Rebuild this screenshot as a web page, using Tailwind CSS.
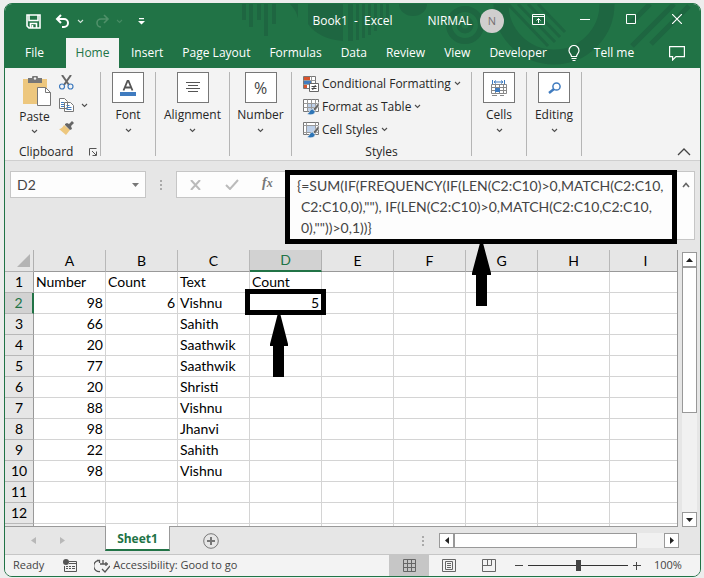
<!DOCTYPE html>
<html lang="en">
<head>
  <meta charset="UTF-8">
  <meta name="viewport" content="width=device-width, initial-scale=1">
  <title>Book1 - Excel</title>
  <script src="https://cdn.jsdelivr.net/npm/@tailwindcss/browser@4"></script>
</head>
<body class="bg-[#ededed] pt-[3px] pl-1 pr-[3px] font-['Open_Sans','Noto_Sans',sans-serif] text-xs text-[#262626]">

  <!-- Shared icons -->
  <svg class="hidden">
    <symbol id="chevron" viewBox="0 0 7 5"><path d="M1 1l2.500 2.500L6 1" fill="none" stroke="currentColor" stroke-width="1.100" opacity=".8"/></symbol>
    <symbol id="table-brush" viewBox="0 0 16 16">
      <path d="M.5.5h15v12H.5z" fill="#fff" stroke="#777"/>
      <path d="M4 4h8v8H4z" fill="#bdd0e9"/>
      <path d="M.5 4.500h15M.5 8.500h15M4.500.5v12M8.500.5v12M12.500.5v12" stroke="#999" fill="none"/>
      <path d="M16 3l-6 7 2 2 4-5z" fill="#666" stroke="#f3f3f3" stroke-width=".6"/>
      <path d="M9.500 10c-3 0-2.500 4-5.500 5 3 1.500 8 1 8-2.500z" fill="#2e75b6" stroke="#f3f3f3" stroke-width=".6"/>
    </symbol>
    <symbol id="cell-brush" viewBox="0 0 16 16">
      <path d="M.5.5h15v12H.5z" fill="#fff" stroke="#777"/>
      <path d="M3 4h10v6H3z" fill="#bdd0e9"/>
      <path d="M.5 3.500h15M.5 10.500h15M3.500.5v12M12.500.5v12" stroke="#999" fill="none"/>
      <path d="M16 3l-6 7 2 2 4-5z" fill="#666" stroke="#f3f3f3" stroke-width=".6"/>
      <path d="M9.500 10c-3 0-2.500 4-5.500 5 3 1.500 8 1 8-2.500z" fill="#2e75b6" stroke="#f3f3f3" stroke-width=".6"/>
    </symbol>
  </svg>

  <div class="rounded-lg overflow-hidden border border-[#217346] bg-[#e6e6e6]">

    <!-- Title bar and tabs -->
    <header class="relative bg-[#217346] text-white">
      <svg class="absolute right-0 top-0 w-[695px] h-16" viewBox="5 4 695 64" fill="#1e6641">
        <path d="M242 4h4v16h-4zM249 4h4v23h-4zM257 4h4v16h-4zM264 4h4v32h-4zM272 4h4v20h-4zM290 4h8v14q-2-8-8-14zM308 4h35v37q-24-2-35-17zM348 4h5v37h-5zM356 4h3v36h-3zM362 4h3v34h-3zM368 4h3v31h-3zM374 4h3v27h-3zM380 4h3v22h-3zM386 4h3v17h-3zM399 4h28a14 12 0 0 1-28 0z"/>
        <g fill="none" stroke="#1e6641">
          <circle cx="465" cy="25" r="16" stroke-width="6"/>
          <circle cx="465" cy="25" r="6" stroke-width="5"/>
          <circle cx="554" cy="4" r="53" stroke-width="15"/>
          <path d="M508 4l40 42M518 4l37 38M528 4l32 33M538 4l27 28" stroke-width="3"/>
          <path d="M632 46l42-42M651 44l38-38M630 24l20-20" stroke-width="5"/>
        </g>
      </svg>

      <div class="relative flex items-center h-[34px]">
        <button aria-label="Save" class="ml-[21px]"><svg width="15" height="15" viewBox="0 0 15 15" fill="none" stroke="#fff" stroke-width="1.600"><path d="M1 1h13v13H3l-2-2zM3 1v5.500h9V1M4.500 14V9.500h6V14M6.500 11v3"/></svg></button>
        <button aria-label="Undo" class="ml-[14px]"><svg width="15" height="14" viewBox="0 0 15 14" fill="none" stroke="#fff" stroke-width="2"><path d="M6 1L2 5l4 4M2 5h7a4 4 0 0 1 0 8H7"/></svg></button>
        <button aria-label="Undo list" class="ml-[7px]"><svg width="7" height="5"><use href="#chevron"/></svg></button>
        <button aria-label="Redo" class="ml-[11px] text-[#4f9069]"><svg width="15" height="14" viewBox="0 0 15 14" fill="none" stroke="currentColor" stroke-width="1.600"><path d="M9 1l4 4-4 4M13 5H6a4 4 0 0 0 0 8"/></svg></button>
        <button aria-label="Redo list" class="ml-[6px] text-[#4f9069]"><svg width="7" height="5"><use href="#chevron"/></svg></button>
        <button aria-label="Customize toolbar" class="ml-[15px]"><svg width="7" height="7" viewBox="0 0 7 7"><path d="M1 0h5v1.200H1zM0 3h7L3.500 6.500z" fill="#fff"/></svg></button>
        <h1 class="ml-auto whitespace-pre">Book1  -  Excel</h1>
        <span class="ml-[35px]">NIRMAL</span>
        <span class="ml-2 size-6 rounded-full bg-[#d0cece] text-[#766f72] text-[11px] leading-6 text-center">N</span>
        <button aria-label="Ribbon display options" class="ml-7 mb-1"><svg width="13" height="11" viewBox="0 0 13 11" fill="none" stroke="#fff"><path d="M.5.5h12v10H.5zM.5 2.500h12M6.500 9V4.500M4.500 6.500l2-2 2 2"/></svg></button>
        <button aria-label="Minimize" class="ml-[35px] mb-1"><svg width="10" height="10" viewBox="0 0 10 10"><path d="M0 5.500h10" stroke="#fff"/></svg></button>
        <button aria-label="Maximize" class="ml-9 mb-1"><svg width="10" height="10" viewBox="0 0 10 10"><path d="M.5.5h9v9h-9z" fill="none" stroke="#fff"/></svg></button>
        <button aria-label="Close" class="ml-9 mr-[18px] mb-1"><svg width="10" height="10" viewBox="0 0 10 10"><path d="M0 0l10 10M10 0L0 10" stroke="#fff" stroke-width="1.200"/></svg></button>
      </div>

      <nav class="relative flex items-center h-[30px] leading-[30px]">
        <a href="#" class="pl-5 w-[61px]">File</a>
        <a href="#" class="w-[53px] mr-0.5 text-center bg-[#f3f3f3] text-[#217346] font-medium">Home</a>
        <a href="#" class="pl-[10px] pr-[9px]">Insert</a>
        <a href="#" class="pl-[10px] pr-[9px]">Page Layout</a>
        <a href="#" class="pl-[10px] pr-[9px]">Formulas</a>
        <a href="#" class="pl-[10px] pr-[9px]">Data</a>
        <a href="#" class="pl-[10px] pr-[9px]">Review</a>
        <a href="#" class="pl-[10px] pr-[9px]">View</a>
        <a href="#" class="pl-[10px] pr-[9px]">Developer</a>
        <a href="#" class="flex items-center gap-[14px] pl-[12px]">
          <svg width="12" height="16" viewBox="0 0 12 16" fill="none" stroke="#fff" stroke-width="1.200"><path d="M3.500 11.500C3.500 9 1 8.500 1 5.500a5 5 0 0 1 10 0c0 3-2.500 3.500-2.500 6zM3.500 13.500h5M4.500 15.500h3"/></svg>
          Tell me
        </a>
        <button aria-label="Comments" class="ml-auto mr-[15px]"><svg width="16" height="15" viewBox="0 0 16 15" fill="none" stroke="#fff" stroke-width="1.200"><path d="M.6.6h14.800v10H7L3.600 14v-3.400h-3z"/></svg></button>
      </nav>
    </header>

    <!-- Ribbon -->
    <section class="flex h-[93px] pt-1 pb-1 bg-[#f3f3f3] border-b border-[#cfcfcf]">
      <div class="w-24 border-r border-[#b5b5b5] flex flex-col justify-between">
        <div class="flex">
          <button class="w-[59px] flex flex-col items-center pt-1">
            <svg class="ml-1" width="28" height="30" viewBox="0 0 28 30">
              <path d="M0 3h24v25H0z" fill="#edc77e"/>
              <path d="M5 7V2h4a3 3 0 0 1 6 0h4v5z" fill="#777"/><circle cx="12" cy="2.500" r="1.200" fill="#f3f3f3"/>
              <path d="M14.500 11.500h8l5 5v13h-13z" fill="#fff" stroke="#777"/><path d="M22.500 11.500v5h5" fill="none" stroke="#777"/>
            </svg>
            <span class="mt-[3px] leading-4">Paste</span>
            <svg class="mt-[4px]" width="7" height="5"><use href="#chevron"/></svg>
          </button>
          <div class="flex flex-col items-start gap-2 -ml-[5px] pt-[3px]">
            <button aria-label="Cut"><svg width="15" height="15" viewBox="0 0 15 15" fill="none"><path d="M3 0l7 10M12 0L5 10" stroke="#666" stroke-width="2"/><circle cx="3" cy="11.500" r="2.500" stroke="#3f7bbf" stroke-width="1.200"/><circle cx="11.500" cy="11.500" r="2.500" stroke="#3f7bbf" stroke-width="1.200"/></svg></button>
            <button aria-label="Copy" class="flex items-center gap-[7px]">
              <svg width="15" height="15" viewBox="0 0 15 15" fill="#fff" stroke="#777"><path d="M.5.5h5l3 3v7h-8zM5.500 4.500h6l3 3v6h-9z"/><path d="M2 4.500h3M2 6.500h3M2 8.500h3M7.500 7.500h3M7.500 9.500h5M7.500 11.500h5" stroke="#3f7bbf"/></svg>
              <svg width="7" height="5"><use href="#chevron"/></svg>
            </button>
            <button aria-label="Format Painter"><svg width="15" height="14" viewBox="0 0 15 14"><path d="M5 4l6 5-4 5-7-6c2 0 4-2 5-4z" fill="#edc77e"/><path d="M6 3l2-1 2 1 3-3 2 2-3 3 1 3-2 1-5-5z" fill="#666"/></svg></button>
          </div>
        </div>
        <div class="flex items-center justify-between pl-[14px] pr-[3px] h-2">
          Clipboard
          <button aria-label="Clipboard settings"><svg width="8" height="8" viewBox="0 0 8 8" fill="none" stroke="#555"><path d="M.5 7.500v-7h7M3 3l4 4M7.500 3.500v4h-4"/></svg></button>
        </div>
      </div>

      <button class="w-[55px] border-r border-[#b5b5b5] flex flex-col items-center">
        <span class="flex items-center justify-center w-8 h-[31px] bg-white border border-[#777]"><svg width="16" height="16" viewBox="0 0 16 16" fill="none"><path d="M3.500 10.500L7.500 1h1l4 9.500M5 7.500h6" stroke="#555" stroke-width="1.800"/><path d="M0 12h16v4H0z" fill="#3f7bbf"/></svg></span>
        <span class="mt-1 leading-4">Font</span>
        <svg class="mt-[5px]" width="7" height="5"><use href="#chevron"/></svg>
      </button>
      <button class="w-[74px] border-r border-[#b5b5b5] flex flex-col items-center">
        <span class="flex items-center justify-center w-8 h-[31px] bg-white border border-[#777]"><svg width="14" height="11" viewBox="0 0 14 11" stroke="#555"><path d="M0 .5h14M2 3.500h10M0 6.500h14M2 9.500h10"/></svg></span>
        <span class="mt-1 leading-4">Alignment</span>
        <svg class="mt-[5px]" width="7" height="5"><use href="#chevron"/></svg>
      </button>
      <button class="w-[62px] border-r border-[#b5b5b5] flex flex-col items-center">
        <span class="flex items-center justify-center w-8 h-[31px] bg-white border border-[#777] text-base text-[#444]">%</span>
        <span class="mt-1 leading-4">Number</span>
        <svg class="mt-[5px]" width="7" height="5"><use href="#chevron"/></svg>
      </button>

      <div class="w-[180px] border-r border-[#b5b5b5] flex flex-col">
        <div class="flex flex-col items-start pl-[11px] grow">
          <button class="flex items-center gap-[3px] h-[23px]">
            <svg width="16" height="16" viewBox="0 0 16 16"><path d="M.5.500h12v12H.5z" fill="#fff" stroke="#777"/><path d="M1 1h6v3H1zM1 9h3v3H1z" fill="#d9532c"/><path d="M1 5h8v3H1z" fill="#3f7bbf"/><path d="M.5 4.500h12M.5 8.500h12M8.500.5v8" stroke="#999"/><path d="M6.500 7.500h9v8h-9z" fill="#fff" stroke="#666"/><path d="M8.500 10.500h5M8.500 12.500h5M12.500 9l-3 5" stroke="#444"/></svg>
            Conditional Formatting
            <svg width="7" height="5"><use href="#chevron"/></svg>
          </button>
          <button class="flex items-center gap-[3px] h-[23px]">
            <svg width="16" height="16"><use href="#table-brush"/></svg>
            Format as Table
            <svg width="7" height="5"><use href="#chevron"/></svg>
          </button>
          <button class="flex items-center gap-[3px] h-[23px]">
            <svg width="16" height="16"><use href="#cell-brush"/></svg>
            Cell Styles
            <svg width="7" height="5"><use href="#chevron"/></svg>
          </button>
        </div>
        <div class="flex items-center justify-center h-2">Styles</div>
      </div>

      <button class="w-[55px] border-r border-[#b5b5b5] flex flex-col items-center">
        <span class="flex items-center justify-center w-8 h-[31px] bg-white border border-[#777]"><svg width="16" height="16" viewBox="0 0 16 16" fill="none"><path d="M1.500 0v4M13.500 0v4M3 2h9M5 .5L3 2l2 1.500M10 .5L12 2l-2 1.500" stroke="#3f7bbf"/><path d="M.5 4.500h15v9H.5zM.5 7.500h15M.5 10.500h15M4.500 4.500v9M8.500 4.500v9M12.500 4.500v9M1 15.500h5M9 15.500h4" stroke="#888"/><path d="M4 8h5v4H4z" fill="#3f7bbf"/></svg></span>
        <span class="mt-1 leading-4">Cells</span>
        <svg class="mt-[5px]" width="7" height="5"><use href="#chevron"/></svg>
      </button>
      <button class="w-[55px] border-r border-[#b5b5b5] flex flex-col items-center">
        <span class="flex items-center justify-center w-8 h-[31px] bg-white border border-[#777]"><svg width="13" height="12" viewBox="0 0 13 12" fill="none" stroke="#3f7bbf"><circle cx="8.500" cy="4.500" r="3.600" stroke-width="1.500"/><path d="M6 7l-5 4" stroke-width="2.500"/></svg></span>
        <span class="mt-1 leading-4">Editing</span>
        <svg class="mt-[5px]" width="7" height="5"><use href="#chevron"/></svg>
      </button>
      <button aria-label="Collapse ribbon" class="ml-auto mr-[9px] self-end"><svg width="14" height="8" viewBox="0 0 14 8"><path d="M1 7l6-6 6 6" fill="none" stroke="#444" stroke-width="1.300"/></svg></button>
    </section>

    <!-- Name box and formula bar -->
    <section class="flex items-start h-[89px] pt-[9px] pl-[5px] pr-[5px] text-[#444]">
      <div class="mt-px flex items-center w-[136px] h-[27px] bg-[#fdfdfd] border border-[#c6c6c6]">
        <input aria-label="Name Box" value="D2" class="w-full min-w-0 pl-[6px] font-['Lato',sans-serif] text-sm outline-none">
        <svg class="shrink-0 mr-[6px]" width="7" height="4" viewBox="0 0 7 4"><path d="M0 0h7L3.500 4z" fill="#777"/></svg>
      </div>
      <svg class="mt-[10px] ml-[14px] mr-[14px] shrink-0" width="2" height="10" viewBox="0 0 2 10"><path d="M0 0h2v2H0zM0 4h2v2H0zM0 8h2v2H0z" fill="#aaa"/></svg>
      <div class="mt-px flex items-center w-[109px] shrink-0 h-[27px] pl-[13px] bg-[#fdfdfd] border border-r-0 border-[#c6c6c6]">
        <button aria-label="Cancel"><svg width="11" height="10" viewBox="0 0 11 10"><path d="M1 0l9 10M10 0L1 10" stroke="#bbb" stroke-width="2"/></svg></button>
        <button aria-label="Enter" class="ml-6"><svg width="14" height="11" viewBox="0 0 14 11"><path d="M1 6l4 4 8-9" fill="none" stroke="#bbb" stroke-width="2"/></svg></button>
        <button aria-label="Insert Function" class="ml-[23px] mb-1 font-['Liberation_Serif',serif] font-bold italic text-sm leading-5 text-[#777]">f<span class="text-xs">x</span></button>
      </div>
      <textarea aria-label="Formula Bar" wrap="off" class="grow min-w-0 h-[74px] pl-[11px] -indent-1 overflow-hidden resize-none outline-none bg-[#fdfdfd] border-[5px] border-black font-['Lato',sans-serif] text-sm leading-[21px]">{=SUM(IF(FREQUENCY(IF(LEN(C2:C10)>0,MATCH(C2:C10,
C2:C10,0),""), IF(LEN(C2:C10)>0,MATCH(C2:C10,C2:C10,
0),""))>0,1))}</textarea>
      <button aria-label="Collapse formula bar" class="mt-px w-[18px] h-[69px] flex justify-center pt-[10px] bg-[#fdfdfd] border border-l-0 border-[#c6c6c6]"><svg width="8" height="6" viewBox="0 0 8 6"><path d="M1 5l3-3.500L7 5" fill="none" stroke="#666" stroke-width="1.600"/></svg></button>
    </section>

    <!-- Worksheet -->
    <main class="flex">
      <table class="grow table-fixed border-separate border-spacing-0 w-0 border-r border-b border-[#999] font-['Lato',sans-serif] text-sm leading-5 text-black">
        <colgroup>
          <col class="w-[29px]"><col class="w-[72px]"><col class="w-[72px]"><col class="w-[72px]"><col class="w-[72px]"><col class="w-[72px]"><col class="w-[72px]"><col class="w-[72px]"><col class="w-[72px]"><col>
        </colgroup>
        <thead>
          <tr id="columns">
            <td class="p-0 h-[21px] bg-[#e6e6e6] border-r border-b border-[#b0b0b0]"><svg class="ml-auto mr-[3px]" width="13" height="13" viewBox="0 0 13 13"><path d="M13 0v13H0z" fill="#b4b4b4"/></svg></td>
          </tr>
        </thead>
        <tbody id="rows"></tbody>
      </table>

      <div class="flex flex-col w-[15px] ml-1 mr-[3px] mt-[2px] bg-[#f1f1f1]">
        <button aria-label="Scroll up" class="flex items-center justify-center h-[15px] bg-white border border-[#999]"><svg width="7" height="4" viewBox="0 0 7 4"><path d="M0 4h7L3.500 0z" fill="#222"/></svg></button>
        <div class="h-[146px] bg-white border border-[#999]"></div>
        <button aria-label="Scroll down" class="mt-auto flex items-center justify-center h-[15px] bg-white border border-[#999]"><svg width="7" height="4" viewBox="0 0 7 4"><path d="M0 0h7L3.500 4z" fill="#222"/></svg></button>
      </div>
    </main>

    <!-- Sheet tabs -->
    <section class="flex items-center h-7 border-b border-[#c6c6c6]">
      <button aria-label="Previous sheet" class="ml-[26px]"><svg width="5" height="7" viewBox="0 0 5 7"><path d="M5 0v7L0 3.500z" fill="#b8b8b8"/></svg></button>
      <button aria-label="Next sheet" class="ml-6"><svg width="5" height="7" viewBox="0 0 5 7"><path d="M0 0v7l5-3.500z" fill="#b8b8b8"/></svg></button>
      <a href="#" class="relative self-start ml-10 -mt-px w-[65px] h-[25px] leading-[25px] text-center bg-white border-x border-[#999] border-b-2 border-b-[#217346] font-bold text-[#217346]">Sheet1</a>
      <button aria-label="New sheet" class="ml-[33px]"><svg width="16" height="16" viewBox="0 0 16 16" fill="none" stroke="#777"><circle cx="8" cy="8" r="7.300"/><path d="M8 4v8M4 8h8" stroke-width="2"/></svg></button>
      <svg class="ml-auto mr-[15px]" width="2" height="10" viewBox="0 0 2 10"><path d="M0 0h2v2H0zM0 4h2v2H0zM0 8h2v2H0z" fill="#aaa"/></svg>
      <div class="flex w-[240px] h-[15px] mr-[21px] bg-[#f1f1f1]">
        <button aria-label="Scroll left" class="flex items-center justify-center w-[15px] bg-white border border-[#999]"><svg width="4" height="7" viewBox="0 0 4 7"><path d="M4 0v7L0 3.500z" fill="#222"/></svg></button>
        <div class="w-[183px] bg-white border border-[#999]"></div>
        <button aria-label="Scroll right" class="ml-auto flex items-center justify-center w-[15px] bg-white border border-[#999]"><svg width="4" height="7" viewBox="0 0 4 7"><path d="M0 0v7l4-3.500z" fill="#222"/></svg></button>
      </div>
    </section>

    <!-- Status bar -->
    <footer class="flex items-center h-[21px] bg-[#f3f3f3] text-[11px] text-[#444]">
      <span class="ml-2">Ready</span>
      <svg class="ml-[19px]" width="14" height="13" viewBox="0 0 14 13" fill="none" stroke="#555"><path d="M6 2.500h7.500v10H1.500V7M6 4.500h7M3 7.500h2M6 7.500h2M9 7.500h3M3 9.500h2M6 9.500h2M9 9.500h3"/><circle cx="3" cy="3" r="3" fill="#555" stroke="none"/></svg>
      <button class="ml-[17px] flex items-center gap-[3px]">
        <svg width="16" height="14" viewBox="0 0 16 14" fill="none" stroke="#555" stroke-width="1.300"><path d="M4.500 1.500A5.500 5.500 0 0 0 6 12.500M3 1.500h2.500V4M9 1v4M6 5h8M12 3v4M8 10l3 3 5-6"/></svg>
        Accessibility: Good to go
      </button>
      <button aria-label="Normal view" class="ml-auto w-10 h-full flex items-center justify-center bg-[#c6c6c6]"><svg width="13" height="13" viewBox="0 0 13 13" fill="none" stroke="#666"><path d="M.5.5h12v12H.5zM.5 4.500h12M.5 8.500h12M4.500.5v12M8.500.5v12"/></svg></button>
      <button aria-label="Page layout view" class="w-10 flex justify-center"><svg width="14" height="13" viewBox="0 0 14 13" fill="none" stroke="#666"><path d="M.5.5h13v12H.5zM3.500 2.500h7v8h-7zM5 4.500h4M5 6.500h4M5 8.500h4"/></svg></button>
      <button aria-label="Page break view" class="w-10 flex justify-center"><svg width="14" height="13" viewBox="0 0 14 13" fill="none" stroke="#666"><path d="M.5.5h13v12H.5zM5.500.5v6M9.500.5v6M.5 6.500h9"/></svg></button>
      <button aria-label="Zoom out" class="ml-[6px]"><svg width="8" height="8" viewBox="0 0 8 8"><path d="M0 3.500h8" stroke="#444"/></svg></button>
      <input type="range" aria-label="Zoom" min="0" max="200" value="100" class="ml-[5px] w-[100px] h-px appearance-none bg-[#333] [&::-webkit-slider-thumb]:appearance-none [&::-webkit-slider-thumb]:w-[5px] [&::-webkit-slider-thumb]:h-[11px] [&::-webkit-slider-thumb]:bg-[#444]">
      <button aria-label="Zoom in" class="ml-[5px]"><svg width="8" height="8" viewBox="0 0 8 8"><path d="M0 3.500h8M3.500 0v8" stroke="#444"/></svg></button>
      <span class="w-[28px] ml-[13px] mr-[18px]">100%</span>
    </footer>
  </div>

  <script>
    const letters = ['A', 'B', 'C', 'D', 'E', 'F', 'G', 'H', 'I'];
    const data = [
      ['Number', 'Count', 'Text', 'Count'],
      [98, 6, 'Vishnu', 5],
      [66, '', 'Sahith'],
      [20, '', 'Saathwik'],
      [77, '', 'Saathwik'],
      [20, '', 'Shristi'],
      [88, '', 'Vishnu'],
      [98, '', 'Jhanvi'],
      [22, '', 'Sahith'],
      [98, '', 'Vishnu'],
      [],
      []
    ];

    // Column letters
    const columns = document.getElementById('columns');
    letters.forEach(letter => {
      const th = document.createElement('th');
      th.className = letter === 'D'
        ? 'p-0 h-[21px] font-normal bg-[#d2d2d2] text-[#217346] border-r border-r-[#b0b0b0] border-b-2 border-b-[#217346]'
        : 'p-0 last:pl-1 h-[21px] font-normal bg-[#e6e6e6] border-r border-r-[#b8b8b8] border-b border-b-[#999] last:border-r-0';
      th.textContent = letter;
      columns.appendChild(th);
    });

    // Rows
    const rows = document.getElementById('rows');
    data.forEach((values, r) => {
      const tr = document.createElement('tr');
      const th = document.createElement('th');
      th.className = r === 1
        ? 'p-0 h-[21px] font-normal bg-[#d2d2d2] text-[#217346] border-r-2 border-r-[#217346] border-b border-b-[#b8b8b8]'
        : 'p-0 h-[21px] font-normal bg-[#e6e6e6] border-r border-r-[#999] border-b border-b-[#b8b8b8]';
      th.textContent = r + 1;
      tr.appendChild(th);
      letters.forEach((letter, c) => {
        const value = values[c] ?? '';
        const td = document.createElement('td');
        td.className = 'relative h-[21px] py-0 px-0.5 bg-white border-r border-b border-[#d4d4d4] last:border-r-0';
        if (typeof value === 'number') td.classList.add('text-right');
        td.textContent = value;
        if (r === 1 && letter === 'D') td.id = 'active';
        tr.appendChild(td);
      });
      rows.appendChild(tr);
    });

    // Top edge of row 13
    rows.insertAdjacentHTML('beforeend', '<tr><td class="p-0 h-[2px] border-r border-[#999]"></td>' +
      '<td class="p-0 bg-white border-r border-[#d4d4d4] last:border-r-0"></td>'.repeat(9) + '</tr>');

    // Marks around the active cell and below the formula bar
    document.getElementById('active').insertAdjacentHTML('beforeend', `
      <div class="absolute z-10 -left-[5px] -top-1 w-[81px] h-[26px] border-[5px] border-black"></div>
      <svg class="absolute z-10 left-5 top-5" width="18" height="64" viewBox="0 0 18 64"><path d="M8 0h2l8 31v2h-4v31H3V33H0v-2z"/></svg>
      <svg class="absolute z-10 left-[222px] -top-[50px]" width="19" height="63" viewBox="0 0 19 63"><path d="M8 0h3l8 30v2h-4v31H4V32H0v-2z"/></svg>`);
  </script>
</body>
</html>
